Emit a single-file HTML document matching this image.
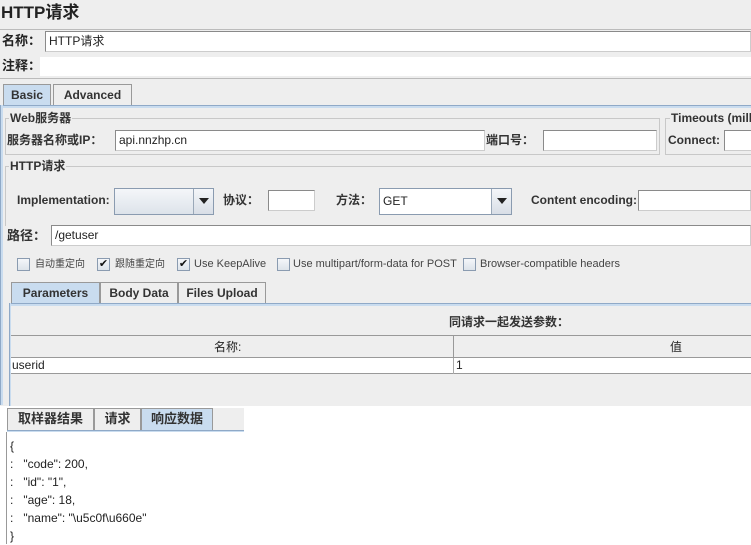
<!DOCTYPE html>
<html><head><meta charset="utf-8"><style>
*{margin:0;padding:0;box-sizing:border-box}
body{width:751px;height:544px;overflow:hidden;background:#fff;position:relative;font-family:"Liberation Sans","Noto Sans CJK SC",sans-serif;font-size:12px;color:#222}
.a{position:absolute;white-space:nowrap;line-height:16px}
.b{font-weight:bold;color:#333}
.in{position:absolute;background:#fff;border:1px solid #8a8a8a;border-right-color:#ccc;border-bottom-color:#ccc;padding-left:3px;line-height:19px;white-space:nowrap;overflow:hidden}
.grp{position:absolute;border:1px solid #c8c8c8}
.lg{position:absolute;background:#eeeeee;padding:0 1px;font-weight:bold;color:#333;white-space:nowrap;line-height:16px}
.tab{position:absolute;border:1px solid #999;border-bottom:none;background:#eeeeee;font-weight:bold;color:#333;text-align:center;white-space:nowrap}
.tab.s{background:#c9dcef}
.cb{position:absolute;width:13px;height:13px;border:1px solid #8a9bb0;background:linear-gradient(#f4f6f9,#dde3ea);font-size:11px;line-height:11px;text-align:center;color:#111}
.cl{position:absolute;font-size:11px;color:#444;white-space:nowrap;line-height:13px}
.dd{position:absolute;background:linear-gradient(#f4f6f9,#d8dee6);border-left:1px solid #9aa8b8}
.dd:after{content:"";position:absolute;left:5px;top:9px;border-left:5px solid transparent;border-right:5px solid transparent;border-top:6px solid #222}
</style></head><body>
<div class="a" style="left:0;top:0;width:751px;height:406px;background:#eeeeee"></div>
<div class="a b" style="left:1px;top:3px;font-size:17px;line-height:20px;color:#222">HTTP请求</div>
<div class="a" style="left:0;top:29px;width:751px;height:50px;border-top:1px solid #bbb;border-bottom:1px solid #bbb"></div>
<div class="a b" style="left:2px;top:33px;font-size:13px;color:#222">名称：</div>
<div class="in" style="left:45px;top:31px;width:706px;height:21px">HTTP请求</div>
<div class="a b" style="left:2px;top:58px;font-size:13px;color:#222">注释：</div>
<div class="a" style="left:40px;top:57px;width:711px;height:19px;background:#fff"></div>
<div class="tab s" style="left:3px;top:84px;width:48px;height:22px;line-height:20px">Basic</div>
<div class="tab" style="left:53px;top:84px;width:79px;height:22px;line-height:20px">Advanced</div>
<div class="a" style="left:0;top:105px;width:751px;height:3px;background:#c9dcef;border-top:1px solid #8fa9c7"></div>
<div class="a" style="left:0;top:105px;width:3px;height:300px;background:#c9dcef;border-left:1px solid #8fa9c7"></div>
<div class="grp" style="left:5px;top:118px;width:655px;height:37px"></div>
<div class="lg" style="left:9px;top:110px">Web服务器</div>
<div class="a b" style="left:7px;top:132px">服务器名称或IP：</div>
<div class="in" style="left:115px;top:130px;width:370px;height:21px">api.nnzhp.cn</div>
<div class="a b" style="left:486px;top:132px">端口号：</div>
<div class="in" style="left:543px;top:130px;width:114px;height:21px"></div>
<div class="grp" style="left:665px;top:118px;width:90px;height:37px"></div>
<div class="lg" style="left:670px;top:110px">Timeouts (milli</div>
<div class="a b" style="left:668px;top:132px">Connect:</div>
<div class="in" style="left:724px;top:130px;width:40px;height:21px"></div>
<div class="grp" style="left:5px;top:166px;width:760px;height:60px;border-bottom:none;border-right:none"></div>
<div class="lg" style="left:9px;top:158px">HTTP请求</div>
<div class="a b" style="left:17px;top:192px">Implementation:</div>
<div class="in" style="left:114px;top:188px;width:100px;height:27px;background:linear-gradient(#f4f6f9,#dde3ea);border-color:#8a9bb0"></div>
<div class="dd" style="left:193px;top:189px;width:20px;height:25px"></div>
<div class="a b" style="left:223px;top:192px">协议：</div>
<div class="in" style="left:268px;top:190px;width:47px;height:21px"></div>
<div class="a b" style="left:336px;top:192px">方法：</div>
<div class="in" style="left:379px;top:188px;width:133px;height:27px;line-height:25px;border-color:#8a9bb0">GET</div>
<div class="dd" style="left:491px;top:189px;width:20px;height:25px"></div>
<div class="a b" style="left:531px;top:192px">Content encoding:</div>
<div class="in" style="left:638px;top:190px;width:113px;height:21px"></div>
<div class="a b" style="left:7px;top:228px;font-size:13px">路径：</div>
<div class="in" style="left:51px;top:225px;width:700px;height:21px">/getuser</div>
<div class="cb" style="left:17px;top:258px"></div><div class="cl" style="left:35px;top:258px;font-size:10px">自动重定向</div>
<div class="cb" style="left:97px;top:258px">✔</div><div class="cl" style="left:115px;top:258px;font-size:10px">跟随重定向</div>
<div class="cb" style="left:177px;top:258px">✔</div><div class="cl" style="left:194px;top:258px">Use KeepAlive</div>
<div class="cb" style="left:277px;top:258px"></div><div class="cl" style="left:293px;top:258px">Use multipart/form-data for POST</div>
<div class="cb" style="left:463px;top:258px"></div><div class="cl" style="left:480px;top:258px">Browser-compatible headers</div>
<div class="tab s" style="left:11px;top:282px;width:89px;height:22px;line-height:20px">Parameters</div>
<div class="tab" style="left:100px;top:282px;width:78px;height:22px;line-height:20px">Body Data</div>
<div class="tab" style="left:178px;top:282px;width:88px;height:22px;line-height:20px">Files Upload</div>
<div class="a" style="left:9px;top:303px;width:742px;height:3px;background:#c9dcef;border-top:1px solid #8fa9c7"></div>
<div class="a" style="left:9px;top:303px;width:2px;height:103px;background:#c9dcef;border-left:1px solid #8fa9c7"></div>
<div class="a b" style="left:449px;top:314px">同请求一起发送参数：</div>
<div class="a" style="left:11px;top:335px;width:740px;height:23px;border-top:1px solid #999;border-bottom:1px solid #999"></div>
<div class="a" style="left:453px;top:335px;width:1px;height:38px;background:#999"></div>
<div class="a" style="left:214px;top:339px">名称:</div>
<div class="a" style="left:670px;top:339px">值</div>
<div class="a" style="left:11px;top:358px;width:740px;height:16px;background:#fff;border-bottom:1px solid #999"></div>
<div class="a" style="left:453px;top:358px;width:1px;height:16px;background:#aaa"></div>
<div class="a" style="left:12px;top:357px">userid</div>
<div class="a" style="left:456px;top:357px">1</div>
<div class="a" style="left:7px;top:408px;width:237px;height:23px;background:#eeeeee"></div>
<div class="tab" style="left:7px;top:408px;width:87px;height:23px;line-height:19px;font-size:13px">取样器结果</div>
<div class="tab" style="left:94px;top:408px;width:47px;height:23px;line-height:19px;font-size:13px">请求</div>
<div class="tab s" style="left:141px;top:408px;width:72px;height:23px;line-height:19px;font-size:13px">响应数据</div>
<div class="a" style="left:7px;top:430px;width:237px;height:2px;background:#c9dcef;border-top:1px solid #8fa9c7"></div>
<div class="a" style="left:6px;top:432px;width:1px;height:112px;background:#999"></div>
<div class="a" style="left:10px;top:437px;line-height:18px;font-size:12px;color:#222;white-space:pre">{
:   "code": 200,
:   "id": "1",
:   "age": 18,
:   "name": "\u5c0f\u660e"
}</div>
</body></html>
